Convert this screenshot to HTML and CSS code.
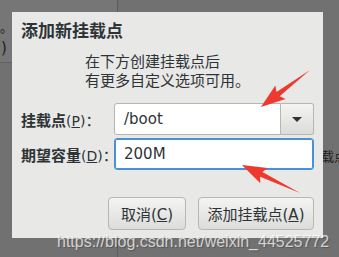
FILE: index.html
```html
<!DOCTYPE html>
<html lang="zh-CN">
<head>
    <meta charset="UTF-8">
    <meta name="viewport" content="width=device-width, initial-scale=1.0">
    <title>添加新挂载点</title>
    <link rel="stylesheet" href="styles.css">
</head>
<body>
    <div class="screen">
        <div class="backdrop">
            <div class="side-col">
                <div class="side-top">
                    <div class="side-line dot">。</div>
                    <div class="side-line paren">)</div>
                </div>
            </div>
            <div class="main-col">
                <div class="hidden-label">挂载点</div>
            </div>
        </div>

        <div class="dialog">
            <h1 class="dialog-title">添加新挂载点</h1>
            <div class="dialog-desc">
                <p>在下方创建挂载点后<br>有更多自定义选项可用。</p>
            </div>

            <div class="form">
                <label class="field-label" for="mountPoint">挂载点<span class="key">(<u>P</u>)</span><span class="colon">：</span></label>
                <div class="combo">
                    <input class="entry" id="mountPoint" type="text" value="/boot">
                    <button class="combo-btn" type="button"><span class="caret"></span></button>
                </div>

                <label class="field-label" for="capacity">期望容量<span class="key">(<u>D</u>)</span><span class="colon">：</span></label>
                <input class="entry entry-focus" id="capacity" type="text" value="200M">
            </div>

            <div class="actions">
                <button class="btn btn-cancel" type="button">取消(<u>C</u>)</button>
                <button class="btn btn-add" type="button">添加挂载点(<u>A</u>)</button>
            </div>
        </div>

        <!-- red markers drawn over the screenshot -->
        <svg class="arrows" width="339" height="257" viewBox="0 0 339 257">
            <g transform="translate(310 70) rotate(142.95)">
                <polygon points="0,0 40,-2.6 37,-8.5 61.5,0 37,8.5 40,2.6" fill="#ee3a2e"/>
            </g>
            <g transform="translate(300 193) rotate(205.8)">
                <polygon points="0,0 43,-2.6 40,-8.5 64.5,0 40,8.5 43,2.6" fill="#ee3a2e"/>
            </g>
        </svg>

        <div class="watermark">https://blog.csdn.net/weixin_44525772</div>
    </div>
</body>
</html>
```

FILE: styles.css
```css
* {
    box-sizing: border-box;
}
body {
    margin: 0;
    background-color: #717171;
    font-family: "DejaVu Sans", "Noto Sans CJK SC", sans-serif;
    color: #2e3436;
}
.screen {
    position: relative;
    width: 339px;
    height: 257px;
    overflow: hidden;
}

/* what sits behind the modal */
.backdrop {
    display: grid;
    grid-template-columns: 118px 1fr;
    height: 100%;
}
.side-col {
    border-right: 1px solid #5c5c5c;
}
.side-top {
    height: 63px;
    background-color: #767676;
    border-bottom: 1px solid #616161;
    padding-top: 18px;
}
.side-line {
    color: #1e1e1e;
    font-size: 13px;
    line-height: 17px;
}
.dot {
    font-family: "Noto Sans CJK SC", sans-serif;
}
.paren {
    font-size: 15px;
    line-height: 20px;
    margin-top: 3px;
    padding-left: 1px;
}
.main-col {
    padding-top: 146px;
    padding-left: 190px;
}
.hidden-label {
    font-family: "Noto Sans CJK SC", sans-serif;
    font-size: 13px;
    color: #1e1e1e;
    white-space: nowrap;
}

/* the dialog */
.dialog {
    position: absolute;
    left: 12px;
    top: 12px;
    width: 311px;
    height: 226px;
    background-color: #e8e8e7;
    padding: 8px 9px 8px 9px;
}
.dialog-title {
    margin: 0;
    font-size: 17px;
    line-height: 22px;
    font-weight: bold;
}
.dialog-desc {
    display: flex;
    justify-content: center;
    margin-top: 11px;
}
.dialog-desc p {
    margin: 0;
    font-size: 15px;
    line-height: 19px;
    text-align: left;
}
.form {
    display: grid;
    grid-template-columns: 93px 200px;
    row-gap: 3px;
    align-items: center;
    margin-top: 12px;
}
.field-label {
    font-size: 15px;
    font-weight: bold;
    white-space: nowrap;
}
.key {
    font-weight: normal;
    font-size: 14px;
}
.colon {
    font-family: "Noto Sans CJK SC", sans-serif;
    font-weight: normal;
}
.combo {
    display: flex;
    height: 32px;
}
.entry {
    width: 100%;
    height: 32px;
    border: 1px solid #b6b6b3;
    border-radius: 3px;
    background-color: #fff;
    padding: 0 0 0 9px;
    font-family: "DejaVu Sans", "Noto Sans CJK SC", sans-serif;
    font-size: 15px;
    color: #2e3436;
    outline: none;
}
.combo .entry {
    flex: 1;
    border-radius: 3px 0 0 3px;
}
.entry-focus {
    border-color: #4a90d9;
    box-shadow: inset 0 0 0 1px #4a90d9;
}
.combo-btn {
    width: 33px;
    height: 32px;
    border: 1px solid #b6b6b3;
    border-left: none;
    border-radius: 0 3px 3px 0;
    background: linear-gradient(#f4f4f3, #dbdbd9);
    display: flex;
    align-items: center;
    justify-content: center;
    padding: 0;
}
.caret {
    width: 0;
    height: 0;
    border-left: 5px solid transparent;
    border-right: 5px solid transparent;
    border-top: 5px solid #2e3436;
    margin-top: 1px;
}
.actions {
    display: flex;
    justify-content: flex-end;
    gap: 12px;
    margin-top: 27px;
}
.btn {
    height: 33px;
    border: 1px solid #b6b6b3;
    border-radius: 4px;
    background: linear-gradient(#f4f4f3, #dcdcda);
    font-family: "DejaVu Sans", "Noto Sans CJK SC", sans-serif;
    font-size: 15px;
    color: #2e3436;
    padding: 0;
}
.btn-cancel {
    width: 78px;
}
.btn-add {
    width: 116px;
}

/* overlays */
.arrows {
    position: absolute;
    left: 0;
    top: 0;
}
.watermark {
    position: absolute;
    left: 57px;
    top: 233px;
    font-family: "Liberation Sans", Arial, sans-serif;
    font-size: 16px;
    line-height: 18px;
    color: rgba(255, 255, 255, 0.72);
    text-shadow: 1px 1px 1px rgba(0, 0, 0, 0.25);
    white-space: nowrap;
}
```
